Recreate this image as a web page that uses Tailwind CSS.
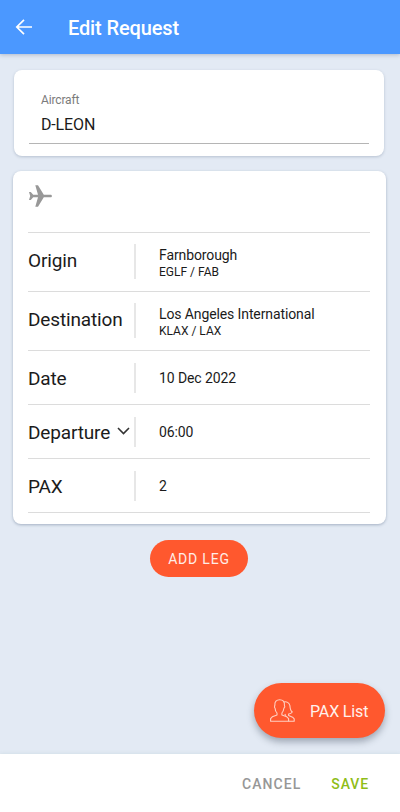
<!DOCTYPE html>
<html lang="en">
<head>
<meta charset="utf-8">
<meta name="viewport" content="width=device-width, initial-scale=1">
<title>Edit Request</title>
<script src="https://cdn.jsdelivr.net/npm/@tailwindcss/browser@4"></script>
</head>
<body class="font-['Roboto',sans-serif] text-[#1b1b1b]">
<div class="relative flex h-[812px] w-[400px] flex-col overflow-hidden bg-[#e3eaf4]">
  <header class="flex h-[54px] shrink-0 items-center bg-[#4b98ff] pl-[15px] text-white shadow-[0_1px_4px_rgba(60,80,110,0.3)]">
    <svg class="h-[18px] w-[18px]" viewBox="0 0 18 18" fill="none" stroke="currentColor" stroke-width="1.7"><path d="M17 9H2M9 1.8 1.8 9 9 16.2"/></svg>
    <h1 class="ml-[35px] pt-px text-[20px] leading-6 font-medium tracking-[-0.13px]">Edit Request</h1>
  </header>

  <main class="flex flex-1 flex-col">
    <section class="mt-4 ml-[14px] h-[86px] w-[370px] rounded-lg bg-white px-[15px] pt-[22px] shadow-[0_1px_3px_rgba(70,90,120,0.28)]">
      <div class="h-[52px] border-b border-[#b5b5b5] pl-3">
        <div class="text-[12px] leading-4 tracking-[-0.15px] text-[#7b7b7b]">Aircraft</div>
        <div class="mt-[7px] text-[16px] leading-5 tracking-[-0.15px]">D-LEON</div>
      </div>
    </section>

    <section class="mt-[15px] ml-[12.5px] h-[353px] w-[373px] rounded-lg bg-white pr-[15.5px] pl-[15.5px] shadow-[0_1px_3px_rgba(70,90,120,0.4)]">
      <div class="h-[62px] border-b border-[#dcdcdc] pt-[14px]">
        <svg class="h-[22px] w-[24px]" viewBox="0 0 24 22" fill="#989898"><path d="M1 7h1.8L5.2 9.7H10L7.3.3H10L15.8 9.7H22.5C24.4 9.7 24.4 12.3 22.5 12.3H15.8L10 21.7H7.3L10 12.3H5.2L2.8 15H1L2.2 11Z"/></svg>
      </div>
      <div class="flex h-[59px] items-center border-b border-[#dcdcdc]">
        <div class="w-[106px] pb-[2px] text-[19px] leading-6 tracking-[-0.15px]">Origin</div>
        <div class="mb-px h-[35px] border-l-2 border-[#e7e7e7]"></div>
        <div class="pt-[2px] pl-[23px]"><div class="text-[14px] leading-[18px] tracking-[-0.11px]">Farnborough</div><div class="text-[12px] leading-4">EGLF / FAB</div></div>
      </div>
      <div class="flex h-[59px] items-center border-b border-[#dcdcdc]">
        <div class="w-[106px] pb-[2px] text-[19px] leading-6 tracking-[-0.15px]">Destination</div>
        <div class="mb-px h-[35px] border-l-2 border-[#e7e7e7]"></div>
        <div class="pt-[2px] pl-[23px]"><div class="text-[14px] leading-[18px] tracking-[-0.11px]">Los Angeles International</div><div class="text-[12px] leading-4">KLAX / LAX</div></div>
      </div>
      <div class="flex h-[54px] items-center border-b border-[#dcdcdc]">
        <div class="w-[106px] pt-[3px] text-[19px] leading-6 tracking-[-0.15px]">Date</div>
        <div class="h-[30px] border-l-2 border-[#e7e7e7]"></div>
        <div class="pt-px pl-[23px] text-[14px] leading-5 tracking-[-0.1px]">10 Dec 2022</div>
      </div>
      <div class="flex h-[54px] items-center border-b border-[#dcdcdc]">
        <div class="flex w-[106px] items-center justify-between pt-[3px] pr-[4px] text-[19px] leading-6 tracking-[-0.15px]">Departure<svg class="mb-[5px] h-[8px] w-[13px]" viewBox="0 0 13 8" fill="none" stroke="#333" stroke-width="1.6"><path d="m1 1 5.5 5.5L12 1"/></svg></div>
        <div class="h-[30px] border-l-2 border-[#e7e7e7]"></div>
        <div class="pt-px pl-[23px] text-[14px] leading-5 tracking-[-0.1px]">06:00</div>
      </div>
      <div class="flex h-[54px] items-center border-b border-[#dcdcdc]">
        <div class="w-[106px] pt-[3px] text-[19px] leading-6 tracking-[-0.15px]">PAX</div>
        <div class="h-[30px] border-l-2 border-[#e7e7e7]"></div>
        <div class="pt-px pl-[23px] text-[14px] leading-5">2</div>
      </div>
    </section>

    <button class="mt-4 ml-[150px] h-[37px] w-[98px] rounded-full bg-[#ff582e] pt-[2px] text-[14px] tracking-[0.8px] text-[#ffede7]">ADD LEG</button>
  </main>

  <button class="absolute top-[683px] left-[254px] flex h-[55px] w-[131px] items-center rounded-full bg-[#ff582e] pl-4 text-[#fff1ec] shadow-[0_4px_7px_rgba(50,60,80,0.38)]">
    <svg class="h-[23px] w-[25px]" viewBox="0 0 25 23" fill="none" stroke="#ffd0c2" stroke-width="1.1" stroke-linejoin="round"><path d="M.6 22.2V19.6L2.3 17.8 7 16V14C5.8 12.7 5.1 11 5.1 9.3 3.8 8.2 4.7 6.8 4.9 6 4.5 2.8 6.5.7 9.7.7s5.2 2.1 4.7 5.3c.6 1.2.5 2.5-.5 3.3-.2 1.8-.8 3.3-2 4.7v2l4.9 1.8 1.8 1.8v2.6Z"/><path d="M13.6 3c3-.9 5.7.7 6.3 3.7.2 2.9.4 4.9 2.4 6.3-.9 1.3-2.1 1.8-3.7 2v1.6l4 1.6 1.6 1.6v2.4h-5.6M14.8 15.1l1.1 1.6"/></svg>
    <span class="ml-[15px] pt-[2px] text-[16px] tracking-[-0.15px]">PAX List</span>
  </button>

  <footer class="flex h-[58px] shrink-0 items-center justify-end bg-white pt-[2px] pr-[31px] text-[14px] font-medium shadow-[0_-1px_3px_rgba(180,205,210,0.3)]">
    <button class="tracking-[1.05px] text-[#979797]">CANCEL</button>
    <button class="ml-[30px] tracking-[0.9px] text-[#8fbd18]">SAVE</button>
  </footer>
</div>
</body>
</html>
